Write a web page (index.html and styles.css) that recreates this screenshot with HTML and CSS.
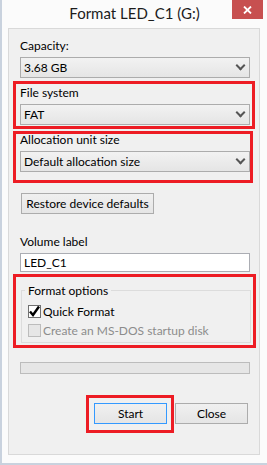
FILE: index.html
```html
<!DOCTYPE html>
<html lang="en">
<head>
<meta charset="UTF-8">
<meta name="viewport" content="width=device-width, initial-scale=1.0">
<title>Format LED_C1 (G:)</title>
<link rel="stylesheet" href="styles.css">
</head>
<body>
<div class="window">
  <div class="titlebar">
    <div class="title">Format LED_C1 (G:)</div>
    <div class="close-btn">
      <svg width="9" height="8" viewBox="0 0 9 8"><path d="M1 0.5 L8 7.5 M8 0.5 L1 7.5" stroke="#fff" stroke-width="1.8" fill="none"/></svg>
    </div>
  </div>

  <div class="client">
    <div class="row">
      <div class="label first">Capacity:</div>
      <div class="combo"><span>3.68 GB</span><span class="chev"></span></div>
    </div>

    <div class="hl hl-fs">
      <div class="label">File system</div>
      <div class="combo"><span>FAT</span><span class="chev"></span></div>
    </div>

    <div class="hl hl-alloc">
      <div class="label up">Allocation unit size</div>
      <div class="combo"><span>Default allocation size</span><span class="chev"></span></div>
    </div>

    <div class="row restore-row">
      <div class="btn restore">Restore device defaults</div>
    </div>

    <div class="row">
      <div class="label vol">Volume label</div>
      <div class="textbox">LED_C1</div>
    </div>

    <div class="hl hl-opts">
      <fieldset class="group">
        <legend>Format options</legend>
        <div class="check-row first-check">
          <span class="checkbox">
            <svg width="13" height="13" viewBox="0 0 13 13"><path d="M2 6.5 L5 10 L11 1.5" stroke="#000" stroke-width="2.4" fill="none"/></svg>
          </span>
          <span>Quick Format</span>
        </div>
        <div class="check-row disabled">
          <span class="checkbox"></span>
          <span>Create an MS-DOS startup disk</span>
        </div>
      </fieldset>
    </div>

    <div class="row">
      <div class="progress"></div>
    </div>

    <div class="buttons">
      <div class="hl-start">
        <div class="btn start">Start</div>
      </div>
      <div class="btn close">Close</div>
    </div>
  </div>
</div>
</body>
</html>
```

FILE: styles.css
```css
body {
    margin: 0;
    background-color: #fbfbfb;
    font-family: Lato, "Noto Sans", sans-serif;
    font-size: 12px;
    color: #000;
}

.window {
    width: 267px;
    height: 465px;
    box-sizing: border-box;
    border-left: 2px solid #c9d2de;
    border-bottom: 2px solid #c9d2de;
    background-color: #fbfbfb;
}

.titlebar {
    position: relative;
    height: 28px;
}

.title {
    text-align: center;
    font-size: 15px;
    line-height: 27px;
    color: #1c1c1c;
}

.close-btn {
    position: absolute;
    top: 0;
    right: 4px;
    width: 31px;
    height: 19px;
    background-color: #c75050;
    display: flex;
    align-items: center;
    justify-content: center;
}

.client {
    box-sizing: border-box;
    width: 252px;
    height: 427px;
    margin-left: 6px;
    border: 1px solid #d9d9d9;
    background-color: #f0f0f0;
    padding: 0 4px;
}

.row {
    padding: 0 5px 0 7px;
}

.label {
    height: 15px;
    line-height: 15px;
}

.label.first {
    margin-top: 9px;
}

.label.up {
    margin-top: -2px;
}

.label.vol {
    margin-top: 20px;
}

.combo {
    box-sizing: border-box;
    height: 21px;
    margin-top: 4px;
    border: 1px solid #acacac;
    background: linear-gradient(#f2f2f2, #e5e5e5);
    display: flex;
    align-items: center;
    justify-content: space-between;
    padding: 0 5px 0 3px;
}

.chev {
    width: 5px;
    height: 5px;
    border-right: 2px solid #555;
    border-bottom: 2px solid #555;
    transform: rotate(45deg);
    margin-top: -4px;
}

.hl {
    border: 3px solid #ed1c24;
    padding: 0 2px 0 4px;
}

.hl-fs {
    margin-top: 3px;
    padding-top: 1px;
    padding-bottom: 1px;
}

.hl-alloc {
    margin-top: 2px;
    margin-right: 2px;
    padding-right: 0;
    padding-bottom: 8px;
}

.btn {
    box-sizing: border-box;
    height: 21px;
    border: 1px solid #acacac;
    background: linear-gradient(#f0f0f0, #e5e5e5);
    display: flex;
    align-items: center;
    justify-content: center;
}

.restore-row {
    margin-top: 10px;
}

.restore {
    width: 133px;
    margin-left: 1px;
}

.textbox {
    box-sizing: border-box;
    height: 19px;
    margin-top: 4px;
    border: 1px solid #abadb3;
    background-color: #fff;
    padding-left: 3px;
    line-height: 17px;
}

.hl-opts {
    margin-top: 2px;
    margin-right: -1px;
    padding: 0;
}

.group {
    margin: 6px 2px 2px 5px;
    padding: 0 0 3px 3px;
    border: 1px solid #dcdcdc;
}

.group legend {
    padding: 0 3px;
    line-height: 15px;
}

.check-row {
    display: flex;
    align-items: center;
    height: 17px;
    padding-left: 3px;
    margin-top: 2px;
}

.check-row.first-check {
    margin-top: 5px;
}

.checkbox {
    box-sizing: border-box;
    width: 13px;
    height: 13px;
    border: 1px solid #707070;
    background-color: #fff;
    margin-right: 2px;
    position: relative;
}

.checkbox svg {
    position: absolute;
    left: -1px;
    top: -1px;
}

.check-row.disabled {
    color: #8c8c8c;
}

.check-row.disabled .checkbox {
    border-color: #bcbcbc;
    background-color: #e6e6e6;
}

.progress {
    box-sizing: border-box;
    height: 12px;
    margin-top: 14px;
    border: 1px solid #bcbcbc;
    background-color: #e6e6e6;
}

.buttons {
    display: flex;
    justify-content: flex-end;
    align-items: flex-start;
    margin-top: 21px;
    padding-right: 7px;
}

.hl-start {
    border: 3px solid #ed1c24;
    padding: 5px 4px 6px 5px;
}

.start {
    width: 73px;
    border-color: #3399ff;
}

.close {
    width: 73px;
    margin-left: 1px;
    margin-top: 8px;
}
```
